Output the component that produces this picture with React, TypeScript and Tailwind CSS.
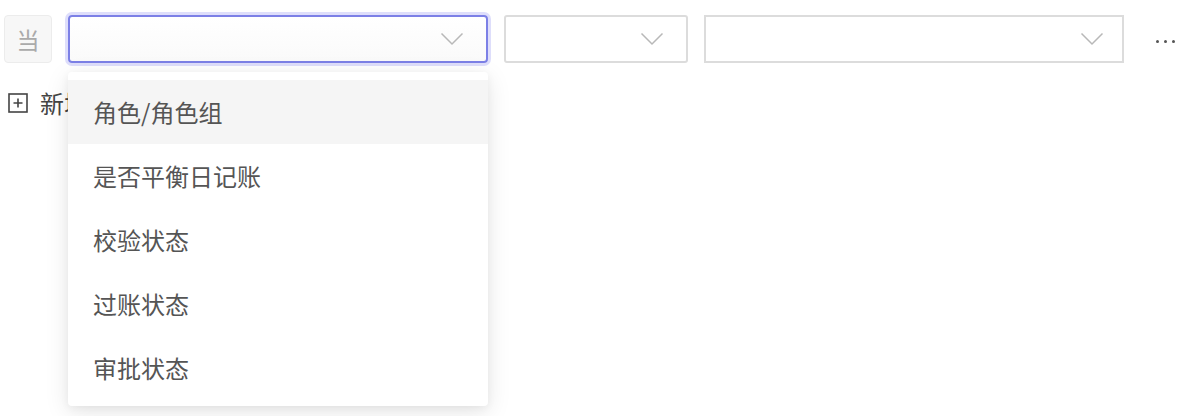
const options = ['角色/角色组', '是否平衡日记账', '校验状态', '过账状态', '审批状态']

function Chevron() {
  return (
    <svg width="24" height="14" viewBox="0 0 24 14" fill="none" className="shrink-0">
      <path d="M1.5 1.5 L12 12 L22.5 1.5" stroke="#b8b8b8" strokeWidth="1.5" />
    </svg>
  )
}

export default function App() {
  return (
    <div
      className="relative w-[1194px] h-[416px] bg-white text-[#555]"
      style={{ fontFamily: '"Noto Sans CJK SC", "Noto Sans", sans-serif' }}
    >
      {/* filter row */}
      <div className="flex items-center gap-4 pl-1 pt-[15px]">
        <div className="w-12 h-12 flex items-center justify-center rounded bg-[#f7f7f7] border border-[#ececec] text-[23px] text-[#aaa]">
          当
        </div>
        <div className="w-[420px] h-12 flex items-center justify-end pr-[22px] rounded border-2 border-[#7c80e6] bg-gradient-to-b from-white to-[#fafafa] shadow-[0_0_0_3px_#dedefb]">
          <Chevron />
        </div>
        <div className="w-[184px] h-12 flex items-center justify-end pr-[22px] rounded-[3px] border-2 border-[#dcdcdc] bg-white">
          <Chevron />
        </div>
        <div className="w-[420px] h-12 flex items-center justify-end pr-[18px] border-2 border-[#dcdcdc] bg-white">
          <Chevron />
        </div>
        <div className="ml-4 flex items-center gap-[5px] pt-1">
          <span className="w-[3px] h-[3px] rounded-full bg-[#555]" />
          <span className="w-[3px] h-[3px] rounded-full bg-[#555]" />
          <span className="w-[3px] h-[3px] rounded-full bg-[#555]" />
        </div>
      </div>

      {/* add row */}
      <div className="flex items-center gap-3 pl-2 pt-[28px]">
        <svg width="20" height="20" viewBox="0 0 20 20" fill="none">
          <rect x="1" y="1" width="18" height="18" stroke="#444" strokeWidth="1.6" />
          <path d="M10 5.5 V14.5 M5.5 10 H14.5" stroke="#444" strokeWidth="1.6" />
        </svg>
        <span className="text-[24px] leading-none text-[#444]">新增</span>
      </div>

      {/* dropdown menu */}
      <div className="absolute left-[68px] top-[72px] w-[420px] pt-2 pb-1.5 bg-white rounded shadow-[0_6px_24px_rgba(0,0,0,0.1),0_2px_8px_rgba(0,0,0,0.05)]">
        {options.map((o, i) => (
          <div
            key={o}
            className={`h-16 flex items-center pl-[25px] text-[24px] text-[#555] ${i === 0 ? 'bg-[#f5f5f5]' : ''}`}
          >
            {o}
          </div>
        ))}
      </div>
    </div>
  )
}
